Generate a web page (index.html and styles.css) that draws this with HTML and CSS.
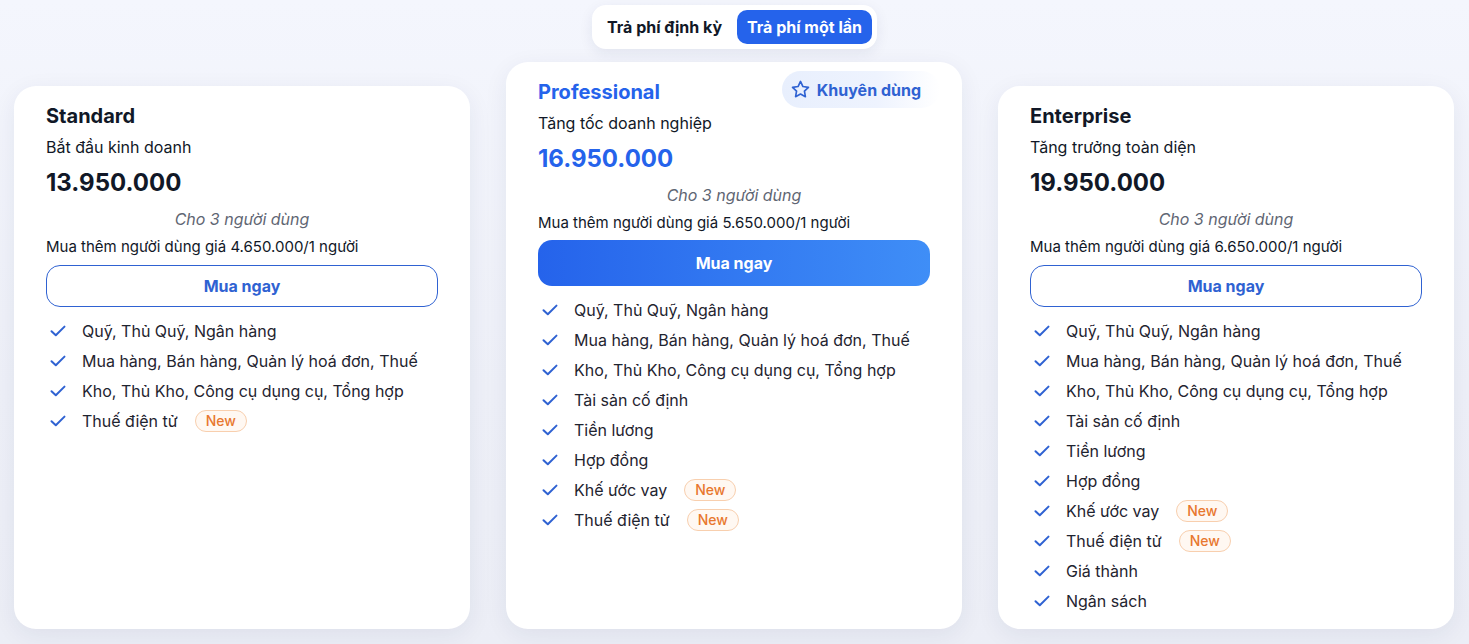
FILE: index.html
```html
<!DOCTYPE html>
<html lang="vi">
<head>
<meta charset="utf-8">
<title>Bảng giá</title>
<link rel="stylesheet" href="styles.css">
</head>
<body>
<div class="page">
  <div class="toggle">
    <button class="toggle-btn">Trả phí định kỳ</button>
    <button class="toggle-btn active">Trả phí một lần</button>
  </div>
  <div class="plans">
    <div class="card">
      <h2 class="title">Standard</h2>
      <p class="sub">Bắt đầu kinh doanh</p>
      <p class="price">13.950.000</p>
      <p class="users">Cho 3 người dùng</p>
      <p class="extra">Mua thêm người dùng giá 4.650.000/1 người</p>
      <button class="buy">Mua ngay</button>
      <ul class="features">
        <li><svg class="chk" viewBox="0 0 16 12"><path d="M1.5 6.2 5.8 10.3 14.5 1.6"/></svg><span>Quỹ, Thủ Quỹ, Ngân hàng</span></li>
        <li><svg class="chk" viewBox="0 0 16 12"><path d="M1.5 6.2 5.8 10.3 14.5 1.6"/></svg><span>Mua hàng, Bán hàng, Quản lý hoá đơn, Thuế</span></li>
        <li><svg class="chk" viewBox="0 0 16 12"><path d="M1.5 6.2 5.8 10.3 14.5 1.6"/></svg><span>Kho, Thủ Kho, Công cụ dụng cụ, Tổng hợp</span></li>
        <li><svg class="chk" viewBox="0 0 16 12"><path d="M1.5 6.2 5.8 10.3 14.5 1.6"/></svg><span>Thuế điện tử</span><span class="new">New</span></li>
      </ul>
    </div>
    <div class="card featured">
      <span class="rec"><svg class="star" viewBox="0 0 24 24"><path d="M12 2.8l2.8 5.8 6.3.9-4.6 4.4 1.1 6.3L12 17.2l-5.6 3 1.1-6.3-4.6-4.4 6.3-.9z"/></svg>Khuyên dùng</span>
      <h2 class="title blue">Professional</h2>
      <p class="sub">Tăng tốc doanh nghiệp</p>
      <p class="price blue">16.950.000</p>
      <p class="users">Cho 3 người dùng</p>
      <p class="extra">Mua thêm người dùng giá 5.650.000/1 người</p>
      <button class="buy primary">Mua ngay</button>
      <ul class="features">
        <li><svg class="chk" viewBox="0 0 16 12"><path d="M1.5 6.2 5.8 10.3 14.5 1.6"/></svg><span>Quỹ, Thủ Quỹ, Ngân hàng</span></li>
        <li><svg class="chk" viewBox="0 0 16 12"><path d="M1.5 6.2 5.8 10.3 14.5 1.6"/></svg><span>Mua hàng, Bán hàng, Quản lý hoá đơn, Thuế</span></li>
        <li><svg class="chk" viewBox="0 0 16 12"><path d="M1.5 6.2 5.8 10.3 14.5 1.6"/></svg><span>Kho, Thủ Kho, Công cụ dụng cụ, Tổng hợp</span></li>
        <li><svg class="chk" viewBox="0 0 16 12"><path d="M1.5 6.2 5.8 10.3 14.5 1.6"/></svg><span>Tài sản cố định</span></li>
        <li><svg class="chk" viewBox="0 0 16 12"><path d="M1.5 6.2 5.8 10.3 14.5 1.6"/></svg><span>Tiền lương</span></li>
        <li><svg class="chk" viewBox="0 0 16 12"><path d="M1.5 6.2 5.8 10.3 14.5 1.6"/></svg><span>Hợp đồng</span></li>
        <li><svg class="chk" viewBox="0 0 16 12"><path d="M1.5 6.2 5.8 10.3 14.5 1.6"/></svg><span>Khế ước vay</span><span class="new">New</span></li>
        <li><svg class="chk" viewBox="0 0 16 12"><path d="M1.5 6.2 5.8 10.3 14.5 1.6"/></svg><span>Thuế điện tử</span><span class="new">New</span></li>
      </ul>
    </div>
    <div class="card">
      <h2 class="title">Enterprise</h2>
      <p class="sub">Tăng trưởng toàn diện</p>
      <p class="price">19.950.000</p>
      <p class="users">Cho 3 người dùng</p>
      <p class="extra">Mua thêm người dùng giá 6.650.000/1 người</p>
      <button class="buy">Mua ngay</button>
      <ul class="features">
        <li><svg class="chk" viewBox="0 0 16 12"><path d="M1.5 6.2 5.8 10.3 14.5 1.6"/></svg><span>Quỹ, Thủ Quỹ, Ngân hàng</span></li>
        <li><svg class="chk" viewBox="0 0 16 12"><path d="M1.5 6.2 5.8 10.3 14.5 1.6"/></svg><span>Mua hàng, Bán hàng, Quản lý hoá đơn, Thuế</span></li>
        <li><svg class="chk" viewBox="0 0 16 12"><path d="M1.5 6.2 5.8 10.3 14.5 1.6"/></svg><span>Kho, Thủ Kho, Công cụ dụng cụ, Tổng hợp</span></li>
        <li><svg class="chk" viewBox="0 0 16 12"><path d="M1.5 6.2 5.8 10.3 14.5 1.6"/></svg><span>Tài sản cố định</span></li>
        <li><svg class="chk" viewBox="0 0 16 12"><path d="M1.5 6.2 5.8 10.3 14.5 1.6"/></svg><span>Tiền lương</span></li>
        <li><svg class="chk" viewBox="0 0 16 12"><path d="M1.5 6.2 5.8 10.3 14.5 1.6"/></svg><span>Hợp đồng</span></li>
        <li><svg class="chk" viewBox="0 0 16 12"><path d="M1.5 6.2 5.8 10.3 14.5 1.6"/></svg><span>Khế ước vay</span><span class="new">New</span></li>
        <li><svg class="chk" viewBox="0 0 16 12"><path d="M1.5 6.2 5.8 10.3 14.5 1.6"/></svg><span>Thuế điện tử</span><span class="new">New</span></li>
        <li><svg class="chk" viewBox="0 0 16 12"><path d="M1.5 6.2 5.8 10.3 14.5 1.6"/></svg><span>Giá thành</span></li>
        <li><svg class="chk" viewBox="0 0 16 12"><path d="M1.5 6.2 5.8 10.3 14.5 1.6"/></svg><span>Ngân sách</span></li>
      </ul>
    </div>
  </div>
</div>
</body>
</html>
```

FILE: styles.css
```css
* { box-sizing: border-box; }
html, body { margin: 0; padding: 0; }
body {
  font-family: Inter, "Noto Sans", "Liberation Sans", sans-serif;
  color: #111827;
  background: linear-gradient(180deg, #f4f6fd 0%, #eef0f8 60%, #eceef6 100%);
  width: 1469px;
  height: 644px;
  overflow: hidden;
}
.page {
  padding: 5px 0 0 14px;
  display: flex;
  flex-direction: column;
  align-items: flex-start;
}
.toggle {
  align-self: center;
  margin-left: -14px;
  display: flex;
  gap: 5px;
  padding: 5px;
  background: #fff;
  border-radius: 14px;
  box-shadow: 0 4px 14px rgba(30, 41, 90, 0.08);
}
.toggle-btn {
  font-family: inherit;
  font-size: 16px;
  font-weight: 700;
  height: 34px;
  padding: 0 10px;
  border: 0;
  border-radius: 10px;
  background: transparent;
  color: #111827;
}
.toggle-btn.active {
  background: #2563eb;
  color: #fff;
}
.plans {
  margin-top: 37px;
  display: grid;
  grid-template-columns: repeat(3, 456px);
  gap: 36px;
}
.card {
  position: relative;
  background: #fff;
  border-radius: 22px;
  padding: 16px 32px 13px;
  box-shadow: 0 6px 24px rgba(30, 41, 90, 0.07);
}
.card.featured { margin-top: -24px; }
.title {
  margin: 0;
  font-size: 20px;
  line-height: 28px;
  font-weight: 700;
}
.blue { color: #2563eb; }
.sub {
  margin: 6px 0 0;
  font-size: 16px;
  line-height: 22px;
}
.price {
  margin: 9px 0 0;
  font-size: 24px;
  line-height: 32px;
  font-weight: 700;
}
.users {
  margin: 9px 0 0;
  font-size: 16px;
  line-height: 22px;
  font-style: italic;
  color: #5f6673;
  text-align: center;
}
.extra {
  margin: 6px 0 0;
  font-size: 15px;
  line-height: 22px;
}
.buy {
  display: block;
  width: 100%;
  height: 42px;
  margin-top: 7px;
  font-family: inherit;
  font-size: 16px;
  font-weight: 700;
  color: #2f62d2;
  background: #fff;
  border: 1px solid #2f62d2;
  border-radius: 14px;
}
.buy.primary {
  height: 46px;
  margin-top: 6px;
  color: #fff;
  border: 0;
  background: linear-gradient(90deg, #2563eb 0%, #3f8ef7 100%);
}
.features {
  list-style: none;
  margin: 9px 0 0;
  padding: 0;
}
.buy.primary + .features { margin-top: 9px; }
.features li {
  display: flex;
  align-items: center;
  height: 30px;
  font-size: 16px;
  color: #1f2430;
  padding-left: 4px;
}
.chk {
  width: 16px;
  height: 12px;
  margin-right: 16px;
  flex: none;
}
.chk path {
  fill: none;
  stroke: #2f62d2;
  stroke-width: 2;
  stroke-linecap: round;
  stroke-linejoin: round;
}
.new {
  margin-left: 17px;
  font-size: 14px;
  line-height: 20px;
  font-weight: 500;
  color: #e8772e;
  background: #fff8f2;
  border: 1px solid #f8cfae;
  border-radius: 12px;
  padding: 0 10px;
}
.rec {
  position: absolute;
  top: 9px;
  right: 22px;
  display: flex;
  align-items: center;
  gap: 6px;
  height: 37px;
  padding: 0 19px 0 8px;
  border-radius: 19px;
  background: linear-gradient(90deg, #e8effd 0%, #eef3fe 60%, #ffffff 100%);
  color: #2f62d2;
  font-size: 16px;
  font-weight: 700;
}
.star {
  width: 21px;
  height: 21px;
}
.star path {
  fill: none;
  stroke: #2f62d2;
  stroke-width: 1.9;
  stroke-linejoin: round;
}
```
